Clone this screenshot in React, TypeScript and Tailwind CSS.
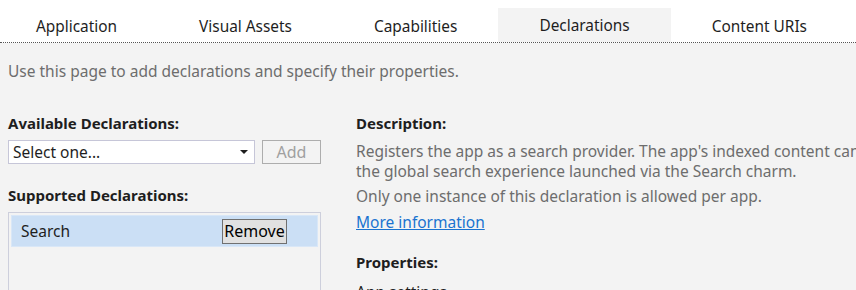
export default function App() {
  const tabs = ["Application", "Visual Assets", "Capabilities", "Declarations", "Content URIs"];
  return (
    <div className="w-[856px] h-[290px] overflow-hidden bg-[#f3f3f3] font-['Noto_Sans',sans-serif] text-[15.5px] leading-[20px] text-[#1e1e1e]">
      <div className="h-[43px] bg-white border-b border-dotted border-[#555555] overflow-hidden">
        <div className="flex -ml-[5px] h-[42px]">
          {tabs.map((t) => (
            <div
              key={t}
              className={
                "mt-[8px] px-[41px] flex items-center whitespace-nowrap text-[15.4px] text-[#1e1e1e] " +
                (t === "Declarations" ? "bg-[#f3f3f3] pt-[2px]" : "pt-[4px]")
              }
            >
              {t}
            </div>
          ))}
        </div>
      </div>
      <div className="pl-[8px]">
        <div className="mt-[18px] text-[#6d6d6d] whitespace-nowrap">Use this page to add declarations and specify their properties.</div>
        <div className="flex mt-[32px]">
          <div className="w-[313px] shrink-0">
            <div className="font-bold text-[15px]">Available Declarations:</div>
            <div className="flex mt-[7px] gap-[7px]">
              <div className="w-[247px] h-[24px] bg-white border border-[#c6c6d8] flex items-center justify-between pl-[4px] pr-[6px]">
                <span>Select one...</span>
                <svg width="8" height="4" viewBox="0 0 8 4"><path d="M0 0h8L4 4z" fill="#1e1e1e" /></svg>
              </div>
              <div className="w-[59px] h-[24px] border border-[#adadad] flex items-center justify-center text-[#a0a0a0] text-[16px]">Add</div>
            </div>
            <div className="font-bold text-[15px] mt-[21px]">Supported Declarations:</div>
            <div className="mt-[7px] h-[100px] border border-[#cdcfdc] p-[2px]">
              <div className="h-[32px] bg-[#cbdff5] border border-[#d9e7f7] flex items-center justify-between pl-[9px] pr-[30px]">
                <span>Search</span>
                <div className="h-[25px] w-[65px] bg-[#e1e1e1] border border-[#707070] flex items-center justify-center text-black text-[16px]">Remove</div>
              </div>
            </div>
          </div>
          <div className="ml-[35px] whitespace-nowrap">
            <div className="font-bold text-[15px]">Description:</div>
            <div className="mt-[8px] text-[#6d6d6d]">
              <div>Registers the app as a search provider. The app's indexed content can be searched from within</div>
              <div>the global search experience launched via the Search charm.</div>
            </div>
            <div className="mt-[5px] text-[#6d6d6d]">Only one instance of this declaration is allowed per app.</div>
            <div className="mt-[6px] text-[#1a73d0] underline">More information</div>
            <div className="mt-[20px] font-bold text-[15px]">Properties:</div>
            <div className="mt-[10px]">App settings</div>
          </div>
        </div>
      </div>
    </div>
  );
}
